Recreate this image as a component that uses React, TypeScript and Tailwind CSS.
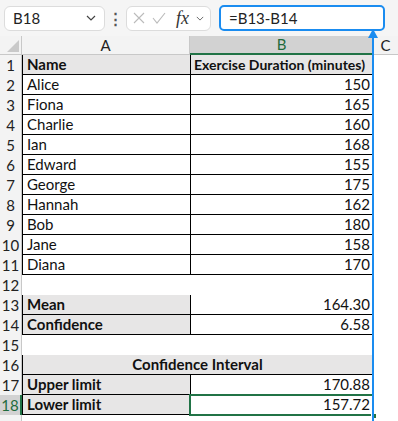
import React from 'react';

type Row = {
  n: number;
  a?: string;
  b?: string;
  kind: 'head' | 'data' | 'empty' | 'stat' | 'merged' | 'limit';
};

const rows: Row[] = [
  { n: 1, a: 'Name', b: 'Exercise Duration (minutes)', kind: 'head' },
  { n: 2, a: 'Alice', b: '150', kind: 'data' },
  { n: 3, a: 'Fiona', b: '165', kind: 'data' },
  { n: 4, a: 'Charlie', b: '160', kind: 'data' },
  { n: 5, a: 'Ian', b: '168', kind: 'data' },
  { n: 6, a: 'Edward', b: '155', kind: 'data' },
  { n: 7, a: 'George', b: '175', kind: 'data' },
  { n: 8, a: 'Hannah', b: '162', kind: 'data' },
  { n: 9, a: 'Bob', b: '180', kind: 'data' },
  { n: 10, a: 'Jane', b: '158', kind: 'data' },
  { n: 11, a: 'Diana', b: '170', kind: 'data' },
  { n: 12, kind: 'empty' },
  { n: 13, a: 'Mean', b: '164.30', kind: 'stat' },
  { n: 14, a: 'Confidence', b: '6.58', kind: 'stat' },
  { n: 15, kind: 'empty' },
  { n: 16, a: 'Confidence Interval', kind: 'merged' },
  { n: 17, a: 'Upper limit', b: '170.88', kind: 'limit' },
  { n: 18, a: 'Lower limit', b: '157.72', kind: 'limit' },
];

const font = { fontFamily: 'Lato, "Liberation Sans", sans-serif' };

const Chevron = ({ className }: { className?: string }) => (
  <svg viewBox="0 0 10 6" className={className} fill="none" stroke="currentColor" strokeWidth="1.2">
    <path d="M1 1l4 4 4-4" />
  </svg>
);

function Toolbar() {
  return (
    <div className="h-9 flex items-center bg-[#f5f5f5] pl-1 pr-3">
      <div className="w-[101px] h-[25px] bg-white border border-[#dcdcdc] rounded-md flex items-center justify-between pl-2 pr-2 text-[15px] text-[#222]">
        <span>B18</span>
        <Chevron className="w-[10px] h-[6px] text-[#444]" />
      </div>
      <div className="w-[21px] flex justify-center text-[#555] text-[15px] font-bold leading-none">⋮</div>
      <div className="w-[85px] h-[25px] bg-white border border-[#dcdcdc] rounded-md flex items-center pl-[6px] gap-[7px] text-[#bbb]">
        <svg viewBox="0 0 12 12" className="w-[12px] h-[12px]" fill="none" stroke="currentColor" strokeWidth="1.1">
          <path d="M1 1l10 10M11 1L1 11" />
        </svg>
        <svg viewBox="0 0 14 12" className="w-[14px] h-[12px]" fill="none" stroke="currentColor" strokeWidth="1.1">
          <path d="M1 6l4 5L13 1" />
        </svg>
        <span className="italic text-[18px] text-[#333] ml-[3px] leading-none" style={{ fontFamily: '"Liberation Serif", serif' }}>
          fx
        </span>
        <Chevron className="w-[8px] h-[5px] text-[#666]" />
      </div>
      <div className="ml-2 w-[166px] h-[26px] bg-white border-2 border-[#1a8cf0] rounded-[5px] flex items-center pl-2 text-[15px] text-[#222]">
        =B13-B14
      </div>
    </div>
  );
}

function cellA(r: Row) {
  if (r.kind === 'empty') return 'bg-white';
  if (r.kind === 'data') return 'bg-white border-l border-b border-black';
  return 'bg-[#e7e6e6] border-l border-b border-black';
}

function cellB(r: Row) {
  if (r.kind === 'empty') return 'bg-white';
  if (r.kind === 'head') return 'bg-[#e7e6e6] border-l border-r border-b border-black';
  return 'bg-white border-l border-r border-b border-black';
}

export default function App() {
  return (
    <div className="w-[398px] h-[421px] overflow-hidden bg-white relative text-[#111]" style={font}>
      <Toolbar />
      <div className="grid grid-cols-[22px_168px_183px_25px]">
        {/* column headers */}
        <div className="h-[19px] bg-[#f3f3f3] border-r border-b border-[#c8c8c8] relative">
          <div className="absolute right-[2px] bottom-[2px] w-0 h-0 border-l-[12px] border-l-transparent border-b-[12px] border-b-[#c9c9c9]" />
        </div>
        <div className="h-[19px] bg-[#f3f3f3] border-r border-b border-[#c8c8c8] flex items-center justify-center text-[15px] text-[#222]">A</div>
        <div className="h-[19px] bg-[#d2d2d2] border-b-2 border-[#217346] flex items-center justify-center text-[15px] text-[#1e6b3c]">B</div>
        <div className="h-[19px] bg-[#f3f3f3] border-b border-[#c8c8c8] flex items-center justify-center text-[15px] text-[#222]">C</div>

        {rows.map((r) => (
          <React.Fragment key={r.n}>
            <div
              className={
                r.n === 18
                  ? 'h-5 bg-[#d2d2d2] border-r-2 border-[#217346] flex items-center justify-center text-[15px] text-[#1e6b3c]'
                  : 'h-5 bg-[#f3f3f3] border-r border-[#c8c8c8] flex items-center justify-center text-[15px] text-[#222]'
              }
            >
              {r.n}
            </div>
            {r.kind === 'merged' ? (
              <div className="col-span-2 h-5 bg-[#e7e6e6] border-l border-r border-b border-black flex items-center justify-center font-bold text-[15px]">
                {r.a}
              </div>
            ) : (
              <>
                <div className={`h-5 flex items-center pl-1 text-[15px] ${r.kind === 'data' ? '' : 'font-bold'} ${cellA(r)}`}>
                  {r.a}
                </div>
                <div
                  className={`h-5 flex items-center ${r.kind === 'head' ? 'pl-[3px] font-bold text-[14px]' : 'justify-end pr-[2px] text-[15px]'} ${cellB(r)}`}
                >
                  {r.b}
                </div>
              </>
            )}
            <div className="h-5 bg-white" />
          </React.Fragment>
        ))}
        {/* top sliver of row 19 */}
        <div className="h-5 bg-[#f3f3f3] border-r border-[#c8c8c8]" />
        <div className="h-5 bg-white" />
        <div className="h-5 bg-white" />
        <div className="h-5 bg-white" />
      </div>

      {/* selection on B18 */}
      <div className="absolute left-[189px] top-[394px] w-[185px] h-[22px] border-2 border-[#217346] pointer-events-none" />
      <div className="absolute left-[371px] top-[413px] w-[6px] h-[6px] bg-[#217346] border border-white" />

      {/* annotation arrow from formula bar */}
      <div className="absolute left-[372px] top-[31px] w-[2px] h-[390px] bg-[#1a8cf0]" />
      <svg className="absolute left-[368px] top-[29px]" width="10" height="9" viewBox="0 0 10 9">
        <path d="M5 0L10 9H0z" fill="#1a8cf0" />
      </svg>
    </div>
  );
}
